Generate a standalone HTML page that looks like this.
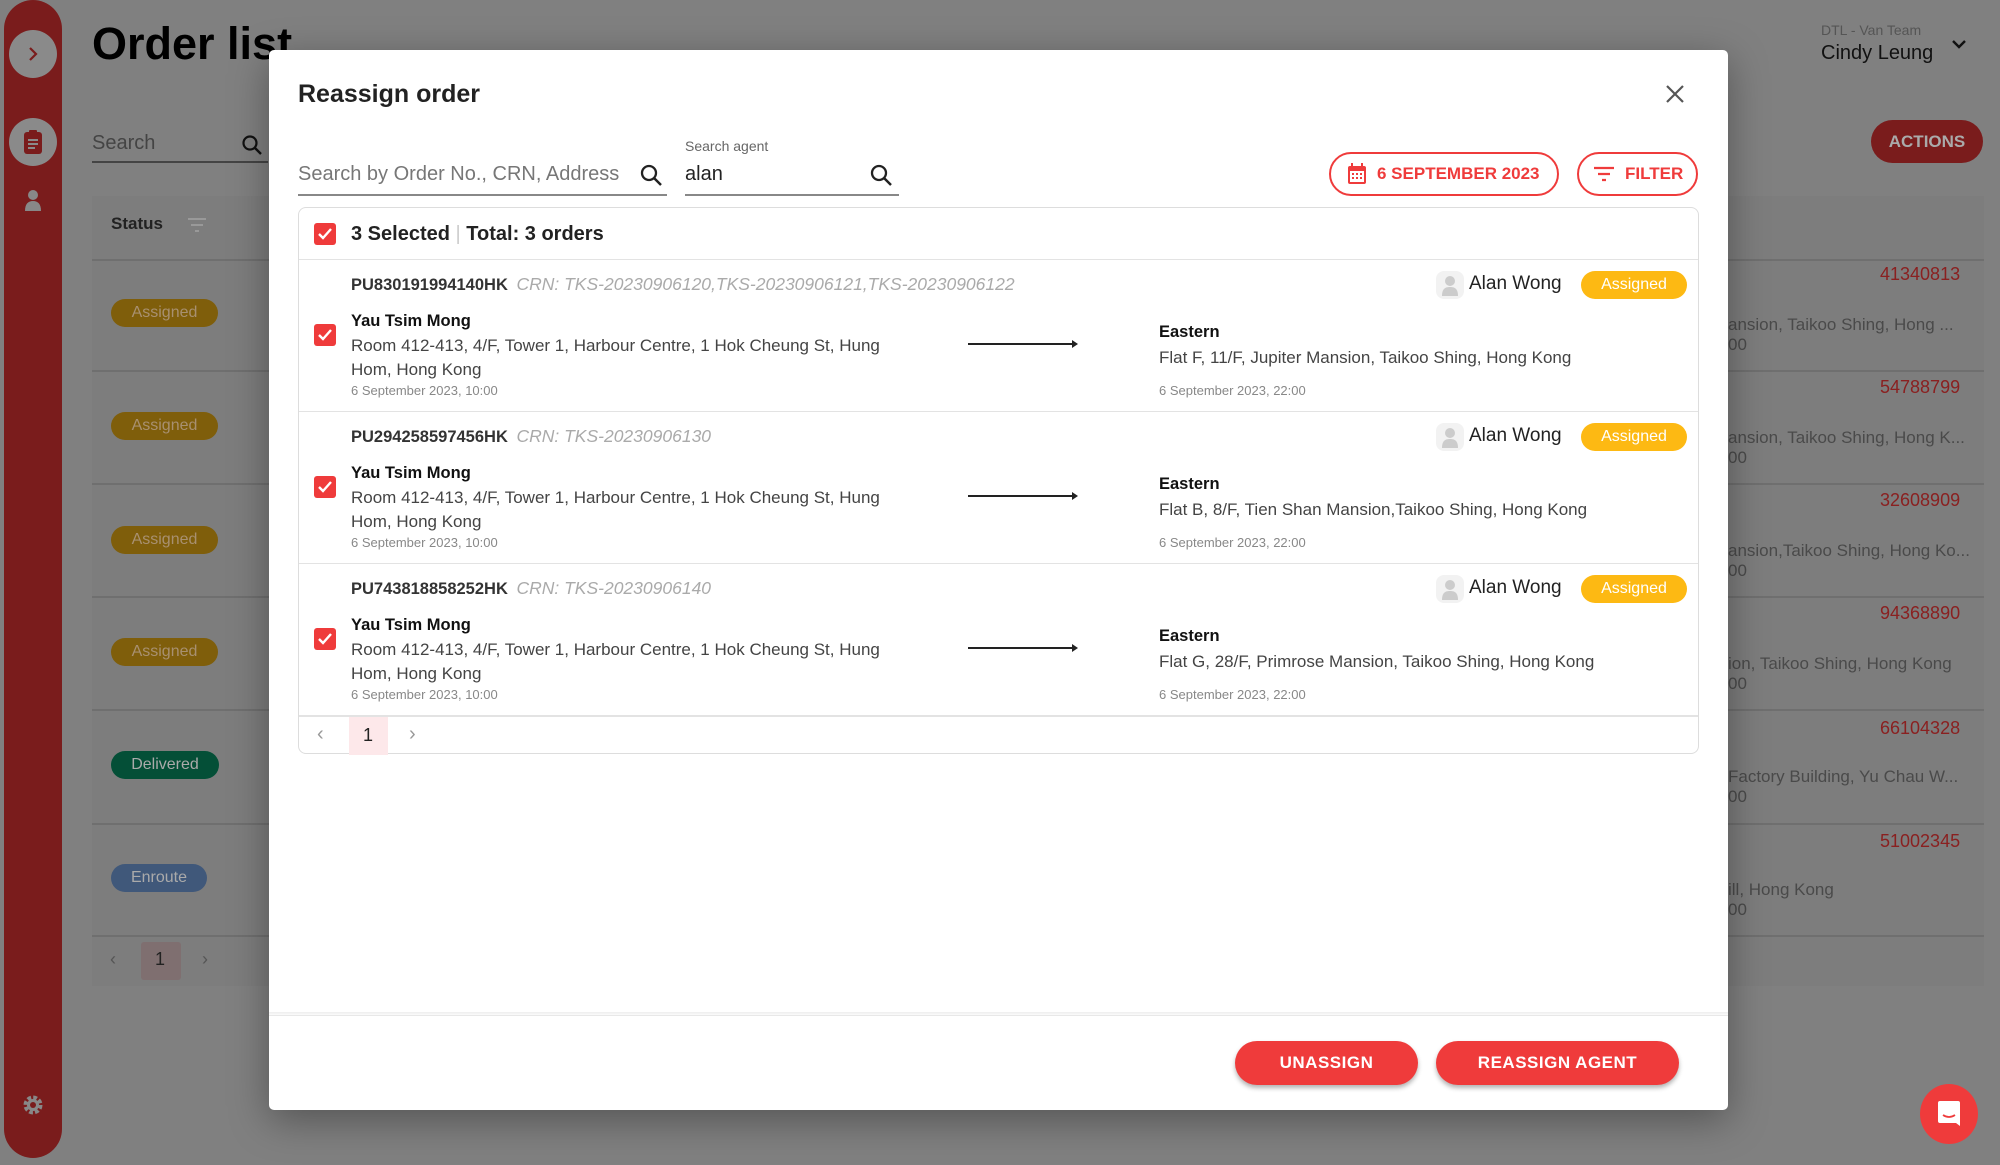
<!DOCTYPE html>
<html><head><meta charset="utf-8"><style>
*{box-sizing:border-box;margin:0;padding:0}
body{width:2000px;height:1165px;overflow:hidden;background:#808080;font-family:"Liberation Sans",sans-serif;position:relative}
.a{position:absolute;white-space:nowrap}
.side{left:4px;top:0;width:58px;height:1158px;background:#7a1c1c;border-radius:29px}
.circ{left:9px;width:48px;height:48px;border-radius:50%;background:#8a8a8a}
.bgbadge{height:28px;border-radius:14px;color:#a89070;font-size:16px;line-height:28px;text-align:center}
.modal{left:269px;top:50px;width:1459px;height:1060px;background:#fff;border-radius:5px;box-shadow:0 10px 40px rgba(0,0,0,.35)}
.card{left:29px;top:157px;width:1401px;height:547px;border:1.5px solid #ddd;border-radius:8px}
.row{left:0;width:100%;height:152px;border-top:1.5px solid #e3e3e3}
.cb{width:22px;height:22px;background:#ef3b3b;border-radius:3px}
.badge{height:28px;width:106px;border-radius:14px;background:#fdb913;color:#fff;font-size:16px;line-height:28px;text-align:center}
.btn{height:44px;border-radius:22px;background:#ef3b3b;color:#fff;font-size:17px;font-weight:bold;line-height:44px;text-align:center;letter-spacing:.5px;box-shadow:0 3px 5px rgba(0,0,0,.3)}
.obtn{height:44px;border:2px solid #ef3b3b;border-radius:22px;color:#ef3b3b;font-size:17px;font-weight:bold;line-height:40px}
.oid{left:52px;top:14px;font-size:16.5px;font-weight:bold;color:#333}
.oid i{font-weight:normal;color:#aaa;margin-left:4px;font-size:17.5px}
.addr{font-size:17px;color:#444;line-height:24px}
</style></head><body>
<div class="a side"></div>
<div class="a circ" style="top:30px"></div>
<svg class="a" style="left:25px;top:45px" width="16" height="18"><path d="M5 3l6 6-6 6" stroke="#7a1c1c" stroke-width="2.2" fill="none"/></svg>
<div class="a circ" style="top:118px"></div>
<svg class="a" style="left:22px;top:128px" width="22" height="28"><rect x="2" y="4" width="18" height="22" rx="3" fill="#7a1c1c"/><rect x="7" y="2" width="8" height="5" rx="1" fill="#7a1c1c"/><path d="M6 12h10M6 16h10M6 20h7" stroke="#8a8a8a" stroke-width="2"/></svg>
<svg class="a" style="left:23px;top:188px" width="20" height="24"><circle cx="10" cy="7" r="5" fill="#888"/><path d="M2 23c0-7 3-10 8-10s8 3 8 10z" fill="#888"/></svg>
<svg class="a" style="left:21px;top:1093px" width="24" height="24"><circle cx="12" cy="12" r="7" fill="none" stroke="#888" stroke-width="5" stroke-dasharray="3.5 2"/><circle cx="12" cy="12" r="6" fill="#888"/><circle cx="12" cy="12" r="3" fill="#7a1c1c"/></svg>
<div class="a" style="left:92px;top:18px;font-size:45px;font-weight:bold;color:#000">Order list</div>
<div class="a" style="left:92px;top:132px;font-size:20px;color:#444">Search</div>
<svg class="a" style="left:240px;top:133px" width="24" height="24"><circle cx="10" cy="10" r="6.5" stroke="#111" stroke-width="2.2" fill="none"/><path d="M15 15l6 6" stroke="#111" stroke-width="2.4"/></svg>
<div class="a" style="left:92px;top:161px;width:176px;height:2px;background:#444"></div>
<div class="a" style="left:92px;top:196px;width:1892px;height:790px;background:#7d7d7d"></div>
<div class="a" style="left:111px;top:214px;font-size:17px;font-weight:bold;color:#222">Status</div>
<svg class="a" style="left:186px;top:216px" width="22" height="18"><path d="M2 3h18M5 9h12M9 15h4" stroke="#999" stroke-width="2"/></svg>
<div class="a" style="left:1821px;top:22px;font-size:14px;color:#555">DTL - Van Team</div>
<div class="a" style="left:1821px;top:42px;font-size:20px;color:#111">Cindy Leung</div>
<svg class="a" style="left:1950px;top:38px" width="18" height="14"><path d="M3 3l6 6 6-6" stroke="#111" stroke-width="2.4" fill="none"/></svg>
<div class="a" style="left:1871px;top:120px;width:112px;height:43px;border-radius:22px;background:#7a1c1c;color:#aaa;font-size:17px;line-height:43px;text-align:center;font-weight:bold">ACTIONS</div>
<div class="a" style="left:92px;top:259px;width:1892px;height:1.5px;background:#6f6f6f"></div>
<div class="a" style="left:92px;top:370px;width:1892px;height:1.5px;background:#6f6f6f"></div>
<div class="a" style="left:92px;top:483px;width:1892px;height:1.5px;background:#6f6f6f"></div>
<div class="a" style="left:92px;top:596px;width:1892px;height:1.5px;background:#6f6f6f"></div>
<div class="a" style="left:92px;top:709px;width:1892px;height:1.5px;background:#6f6f6f"></div>
<div class="a" style="left:92px;top:823px;width:1892px;height:1.5px;background:#6f6f6f"></div>
<div class="a" style="left:92px;top:935px;width:1892px;height:1.5px;background:#6f6f6f"></div>
<div class="a bgbadge" style="left:111px;top:299px;width:107px;background:#7f5e0b">Assigned</div>
<div class="a bgbadge" style="left:111px;top:412px;width:107px;background:#7f5e0b">Assigned</div>
<div class="a bgbadge" style="left:111px;top:526px;width:107px;background:#7f5e0b">Assigned</div>
<div class="a bgbadge" style="left:111px;top:638px;width:107px;background:#7f5e0b">Assigned</div>
<div class="a bgbadge" style="left:111px;top:751px;width:108px;background:#044f37;color:#aaa">Delivered</div>
<div class="a bgbadge" style="left:111px;top:864px;width:96px;background:#40587a;color:#aaa">Enroute</div>
<div class="a" style="left:141px;top:942px;width:40px;height:38px;background:#7f6f70;border-radius:3px"></div>
<div class="a" style="left:155px;top:949px;font-size:18px;color:#222">1</div>
<div class="a" style="left:110px;top:949px;font-size:18px;color:#555">‹</div>
<div class="a" style="left:202px;top:949px;font-size:18px;color:#555">›</div>
<div class="a" style="left:1880px;top:264px;font-size:18px;color:#8a2020">41340813</div>
<div class="a" style="left:1880px;top:377px;font-size:18px;color:#8a2020">54788799</div>
<div class="a" style="left:1880px;top:490px;font-size:18px;color:#8a2020">32608909</div>
<div class="a" style="left:1880px;top:603px;font-size:18px;color:#8a2020">94368890</div>
<div class="a" style="left:1880px;top:718px;font-size:18px;color:#8a2020">66104328</div>
<div class="a" style="left:1880px;top:831px;font-size:18px;color:#8a2020">51002345</div>
<div class="a" style="left:1728px;top:315px;font-size:17px;color:#4a4a4a">ansion, Taikoo Shing, Hong ...<br>00</div>
<div class="a" style="left:1728px;top:428px;font-size:17px;color:#4a4a4a">ansion, Taikoo Shing, Hong K...<br>00</div>
<div class="a" style="left:1728px;top:541px;font-size:17px;color:#4a4a4a">ansion,Taikoo Shing, Hong Ko...<br>00</div>
<div class="a" style="left:1728px;top:654px;font-size:17px;color:#4a4a4a">ion, Taikoo Shing, Hong Kong<br>00</div>
<div class="a" style="left:1728px;top:767px;font-size:17px;color:#4a4a4a">Factory Building, Yu Chau W...<br>00</div>
<div class="a" style="left:1728px;top:880px;font-size:17px;color:#4a4a4a">ill, Hong Kong<br>00</div>
<div class="a" style="left:1920px;top:1084px;width:58px;height:60px;border-radius:50%;background:#ef3b3b"></div>
<svg class="a" style="left:1936px;top:1100px" width="26" height="28"><path d="M2 3q0-2 2-2h18q2 0 2 2v23l-4-3H4q-2 0-2-2z" fill="#fff"/><path d="M7 15q6 4 12 0" stroke="#ef3b3b" stroke-width="1.8" fill="none"/></svg>

<div class="a modal">
 <div class="a" style="left:29px;top:30px;font-size:25px;font-weight:bold;color:#222">Reassign order</div>
 <svg class="a" style="left:1394px;top:32px" width="24" height="24"><path d="M4 4l16 16M20 4L4 20" stroke="#555" stroke-width="2.2"/></svg>
 <div class="a" style="left:29px;top:113px;font-size:20px;color:#777">Search by Order No., CRN, Address</div>
 <svg class="a" style="left:370px;top:113px" width="26" height="26"><circle cx="10" cy="10" r="7" stroke="#222" stroke-width="2.3" fill="none"/><path d="M15 15l7 7" stroke="#222" stroke-width="2.5"/></svg>
 <div class="a" style="left:29px;top:144px;width:369px;height:1.5px;background:#888"></div>
 <div class="a" style="left:416px;top:88px;font-size:14px;color:#666">Search agent</div>
 <div class="a" style="left:416px;top:113px;font-size:20px;color:#222">alan</div>
 <svg class="a" style="left:600px;top:113px" width="26" height="26"><circle cx="10" cy="10" r="7" stroke="#222" stroke-width="2.3" fill="none"/><path d="M15 15l7 7" stroke="#222" stroke-width="2.5"/></svg>
 <div class="a" style="left:416px;top:144px;width:214px;height:1.5px;background:#888"></div>
 <div class="a obtn" style="left:1060px;top:102px;width:230px"><svg class="a" style="left:16px;top:9px" width="20" height="22"><rect x="1" y="3" width="18" height="18" rx="2" fill="#ef3b3b"/><rect x="3" y="8" width="14" height="11" fill="#fff"/><path d="M5 0v5M15 0v5" stroke="#ef3b3b" stroke-width="2"/><path d="M5 11h2M9 11h2M13 11h2M5 15h2M9 15h2M13 15h2" stroke="#ef3b3b" stroke-width="2"/></svg><span class="a" style="left:46px;top:0">6 SEPTEMBER 2023</span></div>
 <div class="a obtn" style="left:1308px;top:102px;width:121px"><svg class="a" style="left:14px;top:11px" width="22" height="18"><path d="M1 3h20M5 9h12M9 15h4" stroke="#ef3b3b" stroke-width="2.2"/></svg><span class="a" style="left:46px;top:0">FILTER</span></div>

 <div class="a card">
  <div class="a cb" style="left:15px;top:15px"><svg width="22" height="22"><path d="M5 11l4 4 8-9" stroke="#fff" stroke-width="2.4" fill="none"/></svg></div>
  <div class="a" style="left:52px;top:15px;font-size:20px;font-weight:bold;color:#222">3 Selected <span style="color:#ccc;font-weight:normal">|</span> Total: 3 orders</div>

  <div class="a row" style="top:51px">
   <div class="a oid">PU830191994140HK <i>CRN: TKS-20230906120,TKS-20230906121,TKS-20230906122</i></div>
   <div class="a cb" style="left:15px;top:64px"><svg width="22" height="22"><path d="M5 11l4 4 8-9" stroke="#fff" stroke-width="2.4" fill="none"/></svg></div>
   <div class="a" style="left:52px;top:52px;font-size:16.5px;font-weight:bold;color:#111">Yau Tsim Mong</div>
   <div class="a addr" style="left:52px;top:74px">Room 412-413, 4/F, Tower 1, Harbour Centre, 1 Hok Cheung St, Hung<br>Hom, Hong Kong</div>
   <div class="a" style="left:52px;top:123px;font-size:13px;color:#888">6 September 2023, 10:00</div>
   <svg class="a" style="left:669px;top:79px" width="112" height="10"><path d="M0 5h106" stroke="#222" stroke-width="2"/><path d="M104 1l6 4-6 4z" fill="#222"/></svg>
   <div class="a" style="left:860px;top:63px;font-size:16.5px;font-weight:bold;color:#111">Eastern</div>
   <div class="a addr" style="left:860px;top:86px">Flat F, 11/F, Jupiter Mansion, Taikoo Shing, Hong Kong</div>
   <div class="a" style="left:860px;top:123px;font-size:13px;color:#888">6 September 2023, 22:00</div>
   <div class="a" style="left:1137px;top:11px;width:28px;height:28px;border-radius:8px;background:#f2f2f2"><svg width="28" height="28"><circle cx="14" cy="10" r="5" fill="#ccc"/><path d="M6 25c0-7 3-9 8-9s8 2 8 9z" fill="#ccc"/></svg></div>
   <div class="a" style="left:1170px;top:13px;font-size:19px;color:#222">Alan Wong</div>
   <div class="a badge" style="left:1282px;top:11px">Assigned</div>
  </div>

  <div class="a row" style="top:203px">
   <div class="a oid">PU294258597456HK <i>CRN: TKS-20230906130</i></div>
   <div class="a cb" style="left:15px;top:64px"><svg width="22" height="22"><path d="M5 11l4 4 8-9" stroke="#fff" stroke-width="2.4" fill="none"/></svg></div>
   <div class="a" style="left:52px;top:52px;font-size:16.5px;font-weight:bold;color:#111">Yau Tsim Mong</div>
   <div class="a addr" style="left:52px;top:74px">Room 412-413, 4/F, Tower 1, Harbour Centre, 1 Hok Cheung St, Hung<br>Hom, Hong Kong</div>
   <div class="a" style="left:52px;top:123px;font-size:13px;color:#888">6 September 2023, 10:00</div>
   <svg class="a" style="left:669px;top:79px" width="112" height="10"><path d="M0 5h106" stroke="#222" stroke-width="2"/><path d="M104 1l6 4-6 4z" fill="#222"/></svg>
   <div class="a" style="left:860px;top:63px;font-size:16.5px;font-weight:bold;color:#111">Eastern</div>
   <div class="a addr" style="left:860px;top:86px">Flat B, 8/F, Tien Shan Mansion,Taikoo Shing, Hong Kong</div>
   <div class="a" style="left:860px;top:123px;font-size:13px;color:#888">6 September 2023, 22:00</div>
   <div class="a" style="left:1137px;top:11px;width:28px;height:28px;border-radius:8px;background:#f2f2f2"><svg width="28" height="28"><circle cx="14" cy="10" r="5" fill="#ccc"/><path d="M6 25c0-7 3-9 8-9s8 2 8 9z" fill="#ccc"/></svg></div>
   <div class="a" style="left:1170px;top:13px;font-size:19px;color:#222">Alan Wong</div>
   <div class="a badge" style="left:1282px;top:11px">Assigned</div>
  </div>

  <div class="a row" style="top:355px">
   <div class="a oid">PU743818858252HK <i>CRN: TKS-20230906140</i></div>
   <div class="a cb" style="left:15px;top:64px"><svg width="22" height="22"><path d="M5 11l4 4 8-9" stroke="#fff" stroke-width="2.4" fill="none"/></svg></div>
   <div class="a" style="left:52px;top:52px;font-size:16.5px;font-weight:bold;color:#111">Yau Tsim Mong</div>
   <div class="a addr" style="left:52px;top:74px">Room 412-413, 4/F, Tower 1, Harbour Centre, 1 Hok Cheung St, Hung<br>Hom, Hong Kong</div>
   <div class="a" style="left:52px;top:123px;font-size:13px;color:#888">6 September 2023, 10:00</div>
   <svg class="a" style="left:669px;top:79px" width="112" height="10"><path d="M0 5h106" stroke="#222" stroke-width="2"/><path d="M104 1l6 4-6 4z" fill="#222"/></svg>
   <div class="a" style="left:860px;top:63px;font-size:16.5px;font-weight:bold;color:#111">Eastern</div>
   <div class="a addr" style="left:860px;top:86px">Flat G, 28/F, Primrose Mansion, Taikoo Shing, Hong Kong</div>
   <div class="a" style="left:860px;top:123px;font-size:13px;color:#888">6 September 2023, 22:00</div>
   <div class="a" style="left:1137px;top:11px;width:28px;height:28px;border-radius:8px;background:#f2f2f2"><svg width="28" height="28"><circle cx="14" cy="10" r="5" fill="#ccc"/><path d="M6 25c0-7 3-9 8-9s8 2 8 9z" fill="#ccc"/></svg></div>
   <div class="a" style="left:1170px;top:13px;font-size:19px;color:#222">Alan Wong</div>
   <div class="a badge" style="left:1282px;top:11px">Assigned</div>
  </div>

  <div class="a" style="left:0;top:507px;width:100%;height:1.5px;background:#e3e3e3"></div>
  <div class="a" style="left:50px;top:509px;width:39px;height:38px;background:#fde8ea"></div>
  <div class="a" style="left:64px;top:517px;font-size:18px;color:#222">1</div>
  <div class="a" style="left:18px;top:515px;font-size:20px;color:#999">‹</div>
  <div class="a" style="left:110px;top:515px;font-size:20px;color:#999">›</div>
 </div>

 <div class="a" style="left:0;top:962px;width:100%;height:4px;background:linear-gradient(#eee,#fff)"></div>
 <div class="a" style="left:0;top:965px;width:100%;height:1px;background:#e8e8e8"></div>
 <div class="a btn" style="left:966px;top:991px;width:183px">UNASSIGN</div>
 <div class="a btn" style="left:1167px;top:991px;width:243px">REASSIGN AGENT</div>
</div>
</body></html>
